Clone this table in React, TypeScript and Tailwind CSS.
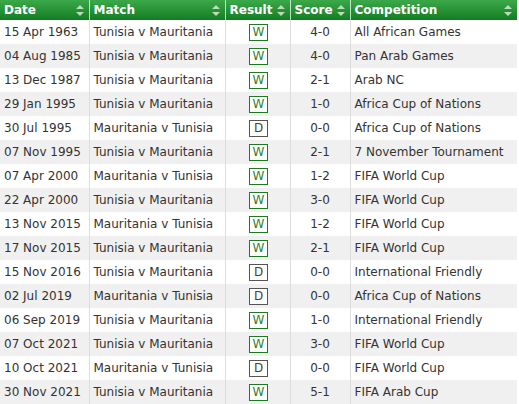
const rows: [string, string, string, string, string][] = [
  ['15 Apr 1963', 'Tunisia v Mauritania', 'W', '4-0', 'All African Games'],
  ['04 Aug 1985', 'Tunisia v Mauritania', 'W', '4-0', 'Pan Arab Games'],
  ['13 Dec 1987', 'Tunisia v Mauritania', 'W', '2-1', 'Arab NC'],
  ['29 Jan 1995', 'Tunisia v Mauritania', 'W', '1-0', 'Africa Cup of Nations'],
  ['30 Jul 1995', 'Mauritania v Tunisia', 'D', '0-0', 'Africa Cup of Nations'],
  ['07 Nov 1995', 'Tunisia v Mauritania', 'W', '2-1', '7 November Tournament'],
  ['07 Apr 2000', 'Mauritania v Tunisia', 'W', '1-2', 'FIFA World Cup'],
  ['22 Apr 2000', 'Tunisia v Mauritania', 'W', '3-0', 'FIFA World Cup'],
  ['13 Nov 2015', 'Mauritania v Tunisia', 'W', '1-2', 'FIFA World Cup'],
  ['17 Nov 2015', 'Tunisia v Mauritania', 'W', '2-1', 'FIFA World Cup'],
  ['15 Nov 2016', 'Tunisia v Mauritania', 'D', '0-0', 'International Friendly'],
  ['02 Jul 2019', 'Mauritania v Tunisia', 'D', '0-0', 'Africa Cup of Nations'],
  ['06 Sep 2019', 'Tunisia v Mauritania', 'W', '1-0', 'International Friendly'],
  ['07 Oct 2021', 'Tunisia v Mauritania', 'W', '3-0', 'FIFA World Cup'],
  ['10 Oct 2021', 'Mauritania v Tunisia', 'D', '0-0', 'FIFA World Cup'],
  ['30 Nov 2021', 'Tunisia v Mauritania', 'W', '5-1', 'FIFA Arab Cup'],
];

function SortIcon() {
  return (
    <svg width="8" height="11" viewBox="0 0 8 11" className="shrink-0">
      <path d="M4 0 L8 4 L0 4 Z" fill="#b9dcb9" />
      <path d="M4 11 L8 7 L0 7 Z" fill="#b9dcb9" />
    </svg>
  );
}

function Head({ label, width }: { label: string; width: string }) {
  return (
    <th className={`${width} h-[20px] p-0 border-r border-white/70 last:border-r-0`}>
      <div className="flex items-center justify-between pl-[4px] pr-[5px] text-white font-bold text-[12px]">
        <span>{label}</span>
        <SortIcon />
      </div>
    </th>
  );
}

function Badge({ r }: { r: string }) {
  const win = r === 'W';
  return (
    <span
      className={`inline-flex items-center justify-center w-[19px] h-[17px] border bg-white text-[12px] leading-none ${
        win ? 'border-[#1f7a1f] text-[#2f7f2f]' : 'border-[#555] text-[#444]'
      }`}
    >
      {r}
    </span>
  );
}

export default function App() {
  return (
    <div className="w-[519px] h-[404px] bg-white overflow-hidden" style={{ fontFamily: '"DejaVu Sans", Verdana, sans-serif' }}>
      <table className="w-[517px] border-collapse table-fixed text-[12px] text-[#333]">
        <thead>
          <tr className="bg-gradient-to-b from-[#3ba94a] to-[#107d22]">
            <Head label="Date" width="w-[89px]" />
            <Head label="Match" width="w-[136px]" />
            <Head label="Result" width="w-[65px]" />
            <Head label="Score" width="w-[60px]" />
            <Head label="Competition" width="w-[167px]" />
          </tr>
        </thead>
        <tbody>
          {rows.map((row, i) => (
            <tr key={i} className={`h-[24px] ${i % 2 === 1 ? 'bg-[#f0f0f0]' : 'bg-white'}`}>
              <td className="px-[4px] border-r border-[#dddddd] whitespace-nowrap">{row[0]}</td>
              <td className="px-[4px] border-r border-[#dddddd] whitespace-nowrap">{row[1]}</td>
              <td className="text-center border-r border-[#dddddd] p-0">
                <div className="flex justify-center pl-[2px]">
                  <Badge r={row[2]} />
                </div>
              </td>
              <td className="text-center border-r border-[#dddddd]">{row[3]}</td>
              <td className="px-[4px] whitespace-nowrap">{row[4]}</td>
            </tr>
          ))}
        </tbody>
      </table>
    </div>
  );
}
